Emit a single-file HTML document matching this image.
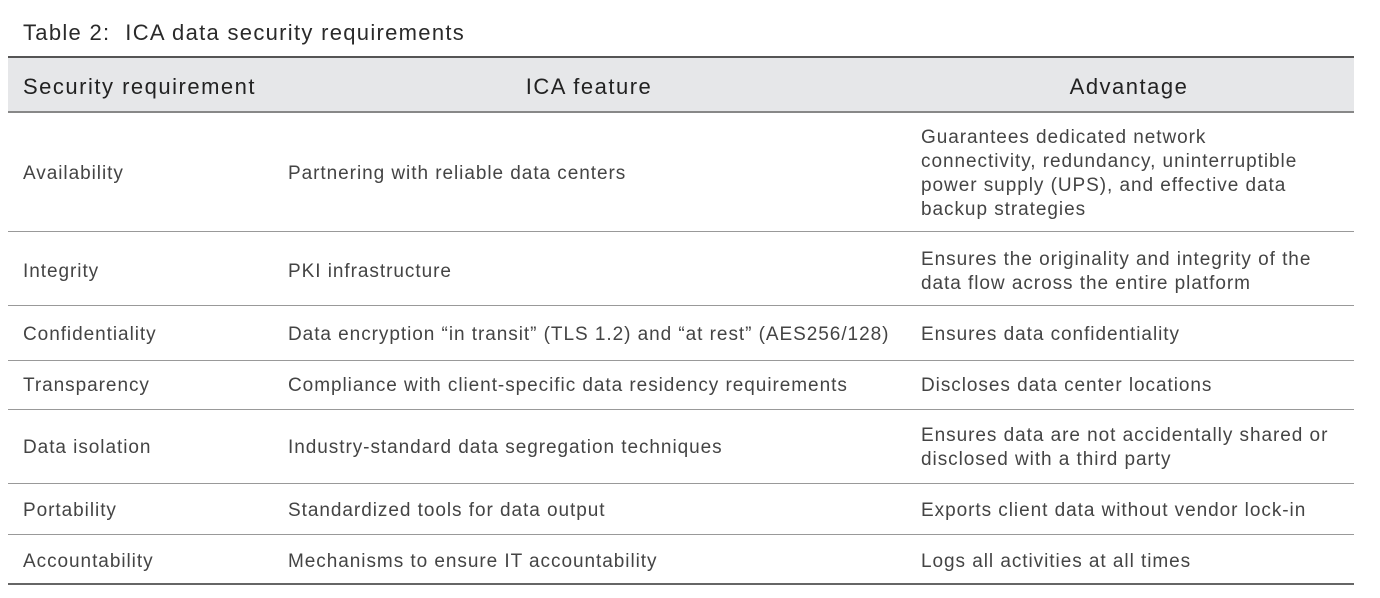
<!DOCTYPE html><html><head><style>
body{margin:0;width:1380px;height:598px;background:#fff;font-family:"Liberation Sans",sans-serif;position:relative;overflow:hidden}
.t{position:absolute;left:23px;top:20px;font-size:22px;letter-spacing:1.3px;color:#2a2a2a}
.hd{position:absolute;left:8px;top:56px;width:1346px;height:53px;background:#e6e7e9;border-top:2px solid #555;border-bottom:2px solid #888}
.h{position:absolute;top:74px;font-size:22px;letter-spacing:1.5px;color:#222;white-space:nowrap}
.l{position:absolute;left:8px;width:1346px;height:0;border-top:1.5px solid #999}
.c{position:absolute;font-size:19px;letter-spacing:0.95px;color:#444;line-height:24px;transform:translateY(-50%);white-space:nowrap;margin-top:1px}
.a{left:23px}.b{left:288px}.d{left:921px}
</style></head><body>
<div class="t">Table 2:&nbsp; ICA data security requirements</div>
<div class="hd"></div>
<div class="h" style="left:23px">Security requirement</div>
<div class="h" style="left:589px;transform:translateX(-50%)">ICA feature</div>
<div class="h" style="left:1129px;transform:translateX(-50%)">Advantage</div>
<div class="l" style="top:231px"></div>
<div class="l" style="top:305px"></div>
<div class="l" style="top:360px"></div>
<div class="l" style="top:409px"></div>
<div class="l" style="top:483px"></div>
<div class="l" style="top:534px"></div>
<div class="l" style="top:583px;border-top:2px solid #666"></div>

<div class="c a" style="top:173px">Availability</div>
<div class="c b" style="top:173px">Partnering with reliable data centers</div>
<div class="c d" style="top:173px">Guarantees dedicated network<br>connectivity, redundancy, uninterruptible<br>power supply (UPS), and effective data<br>backup strategies</div>

<div class="c a" style="top:271px">Integrity</div>
<div class="c b" style="top:271px">PKI infrastructure</div>
<div class="c d" style="top:271px">Ensures the originality and integrity of the<br>data flow across the entire platform</div>

<div class="c a" style="top:334px">Confidentiality</div>
<div class="c b" style="top:334px">Data encryption “in transit” (TLS 1.2) and “at rest” (AES256/128)</div>
<div class="c d" style="top:334px">Ensures data confidentiality</div>

<div class="c a" style="top:385px">Transparency</div>
<div class="c b" style="top:385px">Compliance with client-specific data residency requirements</div>
<div class="c d" style="top:385px">Discloses data center locations</div>

<div class="c a" style="top:447px">Data isolation</div>
<div class="c b" style="top:447px">Industry-standard data segregation techniques</div>
<div class="c d" style="top:447px">Ensures data are not accidentally shared or<br>disclosed with a third party</div>

<div class="c a" style="top:510px">Portability</div>
<div class="c b" style="top:510px">Standardized tools for data output</div>
<div class="c d" style="top:510px">Exports client data without vendor lock-in</div>

<div class="c a" style="top:561px">Accountability</div>
<div class="c b" style="top:561px">Mechanisms to ensure IT accountability</div>
<div class="c d" style="top:561px">Logs all activities at all times</div>
</body></html>
